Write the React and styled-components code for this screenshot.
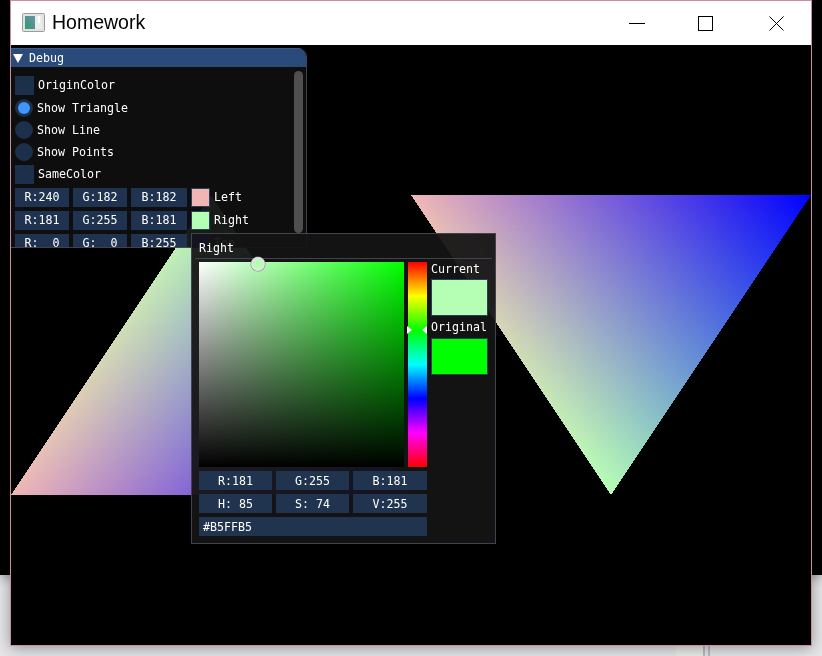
import React from "react";
import styled, { createGlobalStyle } from "styled-components";

const Global = createGlobalStyle`
  html, body { margin: 0; padding: 0; width: 822px; height: 656px; overflow: hidden; background: #e8e8ea; }
  * { box-sizing: border-box; }
`;

const Desktop = styled.div`
  position: relative;
  width: 822px;
  height: 656px;
  display: grid;
  grid-template-rows: 575px 1fr;
  overflow: hidden;
`;
const DarkBand = styled.div`
  position: relative;
  background: #000;
  box-shadow: 0 3px 10px rgba(0, 0, 0, 0.3);
`;
const LightBand = styled.div`
  display: flex;
  justify-content: flex-start;
  align-items: stretch;
  padding: 71px 0 0 676px;
  background: #e6e6e9;
`;
const PaleTile = styled.div`
  width: 27px;
  background: #ececea;
`;
const ThinLine = styled.div`
  width: 2px;
  margin-right: 3px;
  background: #b9b9c9;
`;
const AppWindow = styled.div`
  position: absolute;
  left: 10px;
  top: 0;
  width: 802px;
  height: 646px;
  display: flex;
  flex-direction: column;
  border: 1px solid #cf8c9f;
  box-shadow: 0 2px 14px rgba(0, 0, 0, 0.36);
`;
const TitleBar = styled.header`
  height: 44px;
  flex: none;
  display: flex;
  align-items: center;
  background: #fff;
  padding-left: 11px;
  > svg { position: relative; top: -1px; }
`;
const AppTitle = styled.span`
  font: 400 19.5px "Liberation Sans", Arial, sans-serif;
  color: #000;
  margin-left: 7px;
  flex: 1;
  position: relative;
  top: -1px;
`;
const WinButton = styled.div`
  width: ${(p) => p.$w}px;
  height: 44px;
  flex: none;
  display: flex;
  align-items: center;
  justify-content: center;
  svg { display: block; }
`;
const Viewport = styled.main`
  position: relative;
  flex: 1;
  background: #000;
  font: 400 11.63px "DejaVu Sans Mono", "Liberation Mono", monospace;
  color: #fff;
`;
const SceneSvg = styled.svg`
  position: absolute;
  left: 0;
  top: 0;
  display: block;
`;
const Additive = styled.polygon`
  mix-blend-mode: plus-lighter;
`;

const DebugPanel = styled.section`
  position: absolute;
  left: 0;
  top: 3px;
  width: 296px;
  height: 200px;
  display: flex;
  flex-direction: column;
  overflow: hidden;
  background: rgba(15, 15, 15, 0.94);
  border-right: 1px solid rgba(110, 110, 128, 0.55);
  border-bottom: 1px solid rgba(110, 110, 128, 0.55);
  border-top-right-radius: 9px;
`;
const DebugTitle = styled.div`
  height: 19px;
  flex: none;
  display: flex;
  align-items: center;
  gap: 6px;
  padding-left: 2px;
  background: #294a7a;
  border-top: 1px solid #3d5a88;
`;
const Caret = styled.span`
  width: 0;
  height: 0;
  border-left: 5px solid transparent;
  border-right: 5px solid transparent;
  border-top: 9px solid #fff;
`;
const DebugBody = styled.div`
  flex: 1;
  min-height: 0;
  display: flex;
  padding: 8px 3px 0 4px;
`;
const Rows = styled.div`
  flex: 1;
  display: flex;
  flex-direction: column;
  gap: 3px;
`;
const Scrollbar = styled.div`
  flex: none;
  width: 9px;
  height: 162px;
  margin-top: -4px;
  border-radius: 4.5px;
  background: #4f4f4f;
`;
const OptionRow = styled.div`
  display: flex;
  align-items: center;
  flex: none;
  height: ${(p) => p.$h}px;
`;
const CheckBox = styled.span`
  width: 19px;
  height: 19px;
  flex: none;
  background: #1d304b;
  margin-right: 4px;
`;
const Radio = styled.span`
  width: 18px;
  height: 18px;
  flex: none;
  border-radius: 50%;
  background: #1d304b;
  margin-right: 4px;
  display: flex;
  align-items: center;
  justify-content: center;
  &::after {
    content: "";
    width: 12px;
    height: 12px;
    border-radius: 50%;
    background: ${(p) => (p.$on ? "#4296fa" : "transparent")};
  }
`;
const ColorRow = styled.div`
  display: flex;
  align-items: center;
  flex: none;
  height: 20px;
`;
const ValueBox = styled.span`
  width: ${(p) => p.$w}px;
  height: 19px;
  flex: none;
  margin-right: 4px;
  display: flex;
  align-items: center;
  justify-content: center;
  white-space: pre;
  background: #1f3350;
`;
const RowSwatch = styled.span`
  width: 19px;
  height: 19px;
  flex: none;
  margin-right: 4px;
  background: ${(p) => p.$c};
  border: 1px solid #2a3f5f;
`;

const Popup = styled.section`
  position: absolute;
  left: 180px;
  top: 188px;
  width: 305px;
  height: 311px;
  padding: 0 3px;
  display: flex;
  flex-direction: column;
  background: rgba(20, 20, 20, 0.94);
  border: 1px solid #43434f;
`;
const PopupTitle = styled.div`
  height: 25px;
  flex: none;
  display: flex;
  align-items: center;
  padding: 3px 0 0 4px;
  border-bottom: 1px solid #43434f;
`;
const PickerGrid = styled.div`
  display: grid;
  grid-template-columns: 228px 57px;
  column-gap: 4px;
  padding: 3px 0 0 4px;
`;
const PickerMain = styled.div`
  display: flex;
  flex-direction: column;
  gap: 4px;
`;
const Gradients = styled.div`
  position: relative;
  display: flex;
  gap: 4px;
  height: 205px;
`;
const SVSquare = styled.div`
  width: 205px;
  background: linear-gradient(to bottom, transparent, #000),
    linear-gradient(to right, #fff, #00ff00);
`;
const HueBar = styled.div`
  width: 19px;
  background: linear-gradient(to bottom, #f00, #ff0, #0f0, #0ff, #00f, #f0f, #f00);
`;
const Marker = styled.span`
  position: absolute;
  left: 52px;
  top: -5px;
  width: 14px;
  height: 14px;
  border-radius: 50%;
  background: #b5ffb5;
  border: 2px solid #e4e4e4;
  box-shadow: 0 0 0 0.5px #777;
`;
const HueArrow = styled.span`
  position: absolute;
  top: 64px;
  left: ${(p) => (p.$side === "l" ? "208px" : "223px")};
  width: 0;
  height: 0;
  border-top: 4px solid transparent;
  border-bottom: 4px solid transparent;
  ${(p) => (p.$side === "l" ? "border-left: 5px solid #fff;" : "border-right: 5px solid #fff;")}
`;
const InputRow = styled.div`
  display: grid;
  grid-template-columns: 73px 73px 74px;
  column-gap: 4px;
`;
const InputBox = styled.span`
  height: 19px;
  display: flex;
  align-items: center;
  justify-content: center;
  white-space: pre;
  background: #20334f;
`;
const HexBox = styled.span`
  height: 19px;
  display: flex;
  align-items: center;
  padding-left: 4px;
  background: #20334f;
`;
const PickerSide = styled.div`
  display: flex;
  flex-direction: column;
`;
const SideLabel = styled.div`
  height: ${(p) => p.$h}px;
  padding-bottom: ${(p) => p.$pb}px;
  display: flex;
  align-items: center;
  white-space: nowrap;
`;
const BigSwatch = styled.div`
  height: 37px;
  background: ${(p) => p.$c};
  border: 1px solid #2a3f5f;
`;

const WindowIcon = () => (
  <svg width="23" height="19" viewBox="0 0 23 19">
    <defs>
      <linearGradient id="iconPane" x1="0" y1="1" x2="1" y2="0">
        <stop offset="0" stopColor="#2f9a6c" />
        <stop offset="1" stopColor="#6f8fae" />
      </linearGradient>
    </defs>
    <rect x="0.5" y="0.5" width="22" height="18" rx="1" fill="#e2e2e2" stroke="#9c9c9c" />
    <rect x="3" y="3" width="10" height="13" fill="url(#iconPane)" />
    <rect x="13" y="3" width="7" height="13" fill="#e9eeea" />
    <rect x="16" y="3" width="2" height="7" fill="#fff" />
  </svg>
);

const SCENE = [
  [[0, 450, "rgb(240,182,182)"], [200, 150, "rgb(181,255,181)"], [400, 450, "rgb(0,0,255)"]],
  [[400, 150, "rgb(240,182,182)"], [800, 150, "rgb(0,0,255)"], [600, 450, "rgb(181,255,181)"]],
];

// Foot of the altitude from vertex a on the edge b-c: the end of a's colour ramp.
const foot = (a, b, c) => {
  const dx = c[0] - b[0];
  const dy = c[1] - b[1];
  const t = ((a[0] - b[0]) * dx + (a[1] - b[1]) * dy) / (dx * dx + dy * dy);
  return [b[0] + t * dx, b[1] + t * dy];
};

const Triangles = () => (
  <SceneSvg width="800" height="600" viewBox="0 0 800 600">
    <defs>
      {SCENE.flatMap((tri, ti) =>
        tri.map((v, vi) => {
          const f = foot(v, tri[(vi + 1) % 3], tri[(vi + 2) % 3]);
          return (
            <linearGradient
              key={`${ti}-${vi}`}
              id={`tri${ti}v${vi}`}
              gradientUnits="userSpaceOnUse"
              x1={v[0]}
              y1={v[1]}
              x2={f[0]}
              y2={f[1]}
            >
              <stop offset="0" stopColor={v[2]} />
              <stop offset="1" stopColor="#000" />
            </linearGradient>
          );
        })
      )}
    </defs>
    {SCENE.map((tri, ti) => (
      <g key={ti} style={{ isolation: "isolate" }}>
        {tri.map((_, vi) => (
          <Additive
            key={vi}
            shapeRendering="crispEdges"
            points={tri.map((p) => `${p[0]},${p[1]}`).join(" ")}
            fill={`url(#tri${ti}v${vi})`}
          />
        ))}
      </g>
    ))}
  </SceneSvg>
);

const COLORS = [
  { r: "R:240", g: "G:182", b: "B:182", swatch: "#f0b6b6", label: "Left" },
  { r: "R:181", g: "G:255", b: "B:181", swatch: "#b5ffb5", label: "Right" },
  { r: "R:  0", g: "G:  0", b: "B:255", swatch: "#0000ff", label: "Top" },
];

export default function App() {
  return (
    <Desktop>
      <Global />
      <DarkBand />
      <LightBand>
        <PaleTile />
        <ThinLine />
        <ThinLine />
      </LightBand>
      <AppWindow>
        <TitleBar>
          <WindowIcon />
          <AppTitle>Homework</AppTitle>
          <WinButton $w={65}>
            <svg width="16" height="1" viewBox="0 0 16 1"><path d="M0 0.5h16" stroke="#000" strokeWidth="1" /></svg>
          </WinButton>
          <WinButton $w={72}>
            <svg width="15" height="15" viewBox="0 0 15 15"><rect x="0.5" y="0.5" width="14" height="14" fill="none" stroke="#000" /></svg>
          </WinButton>
          <WinButton $w={70}>
            <svg width="15" height="15" viewBox="0 0 15 15"><path d="M0.5 0.5l14 14M14.5 0.5l-14 14" fill="none" stroke="#000" /></svg>
          </WinButton>
        </TitleBar>
        <Viewport>
          <Triangles />
          <DebugPanel>
            <DebugTitle>
              <Caret />
              <span>Debug</span>
            </DebugTitle>
            <DebugBody>
              <Rows>
                <OptionRow $h={20}><CheckBox />OriginColor</OptionRow>
                <OptionRow $h={19}><Radio $on />Show Triangle</OptionRow>
                <OptionRow $h={19}><Radio />Show Line</OptionRow>
                <OptionRow $h={19}><Radio />Show Points</OptionRow>
                <OptionRow $h={20}><CheckBox />SameColor</OptionRow>
                {COLORS.map((c) => (
                  <ColorRow key={c.label}>
                    <ValueBox $w={54}>{c.r}</ValueBox>
                    <ValueBox $w={54}>{c.g}</ValueBox>
                    <ValueBox $w={56}>{c.b}</ValueBox>
                    <RowSwatch $c={c.swatch} />
                    <span>{c.label}</span>
                  </ColorRow>
                ))}
              </Rows>
              <Scrollbar />
            </DebugBody>
          </DebugPanel>
          <Popup>
            <PopupTitle>Right</PopupTitle>
            <PickerGrid>
              <PickerMain>
                <Gradients>
                  <SVSquare />
                  <HueBar />
                  <Marker />
                  <HueArrow $side="l" />
                  <HueArrow $side="r" />
                </Gradients>
                <InputRow>
                  <InputBox>R:181</InputBox>
                  <InputBox>G:255</InputBox>
                  <InputBox>B:181</InputBox>
                </InputRow>
                <InputRow>
                  <InputBox>H: 85</InputBox>
                  <InputBox>S: 74</InputBox>
                  <InputBox>V:255</InputBox>
                </InputRow>
                <HexBox>#B5FFB5</HexBox>
              </PickerMain>
              <PickerSide>
                <SideLabel $h={17} $pb={4}>Current</SideLabel>
                <BigSwatch $c="#b5ffb5" />
                <SideLabel $h={22} $pb={0}>Original</SideLabel>
                <BigSwatch $c="#00ff00" />
              </PickerSide>
            </PickerGrid>
          </Popup>
        </Viewport>
      </AppWindow>
    </Desktop>
  );
}
